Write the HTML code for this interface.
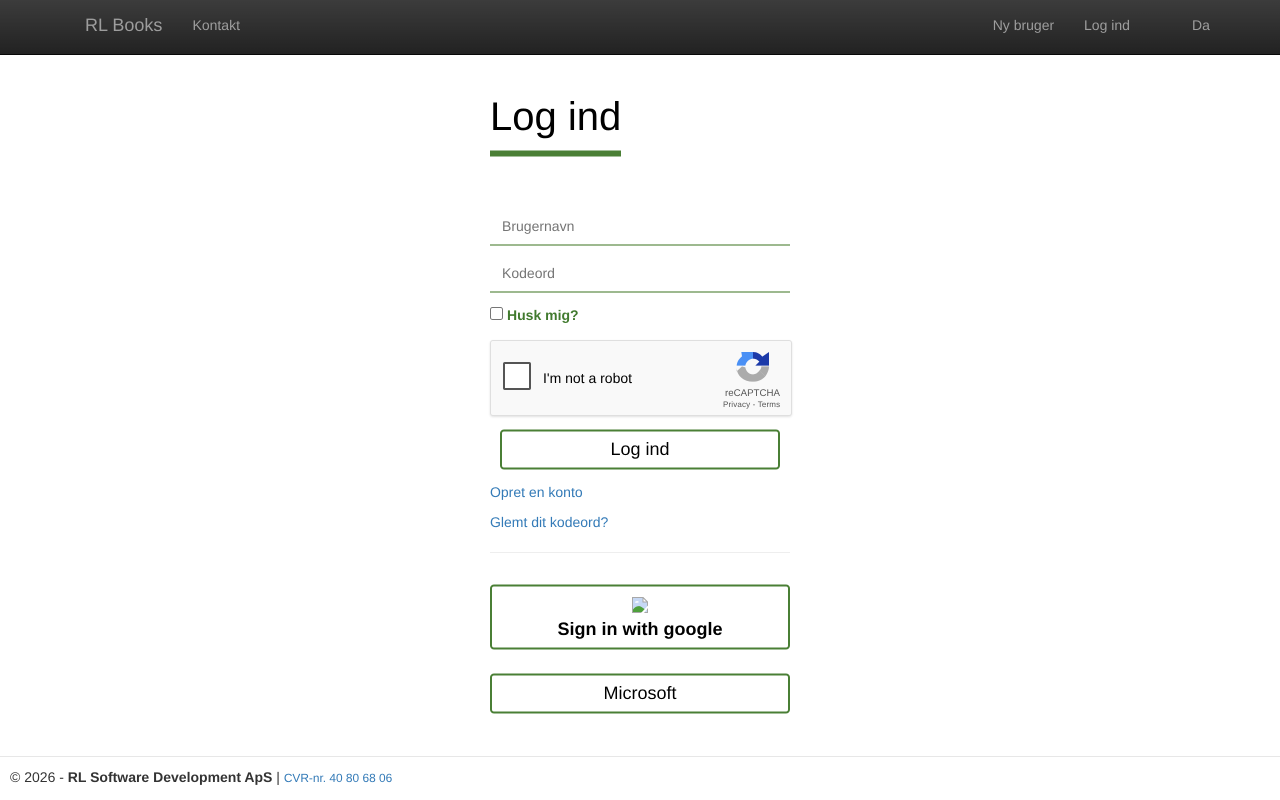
<!DOCTYPE html>
<html lang="da">
<head>
<meta charset="utf-8">
<title>Log ind</title>
<style>
html,body{margin:0;padding:0;background:#fff;}
body{width:1280px;height:800px;position:relative;overflow:hidden;font-family:"Liberation Sans",sans-serif;font-size:14px;line-height:20px;color:#333;text-rendering:geometricPrecision;}
.a{position:absolute;white-space:nowrap;}
.nav{left:0;top:0;width:1280px;height:54px;background:linear-gradient(to bottom,#3c3c3c 0,#222 100%);border-bottom:1px solid #080808;}
.n{color:#9d9d9d;top:15px;}
.field{left:490px;width:300px;height:34px;border-bottom:2px solid #9db98f;box-sizing:content-box;}
.ph{left:502px;color:#757575;}
.t{color:#000;text-align:center;font-size:18px;}
a{color:#337ab7;text-decoration:none;}
</style>
</head>
<body>
<div class="a nav"></div>
<div class="a n" style="left:85px;top:15px;font-size:18px;">RL Books</div>
<div class="a n" style="left:192.5px;">Kontakt</div>
<div class="a n" style="left:992.7px;">Ny bruger</div>
<div class="a n" style="left:1084px;">Log ind</div>
<div class="a n" style="left:1192px;">Da</div>

<div class="a" style="left:490px;top:92px;font-size:40px;line-height:50px;color:#000;">Log ind</div>

<!-- anti-aliased rules and button outlines -->
<svg class="a" style="left:0;top:0;" width="1280" height="800" viewBox="0 0 1280 800">
  <rect x="490" y="150.500" width="131" height="6" fill="#4a7f35"/>
  <g fill="#fff" stroke="#4a7f35" stroke-width="2">
    <rect x="501" y="430.500" width="278" height="38" rx="3"/>
    <rect x="491" y="585.500" width="298" height="63" rx="3"/>
    <rect x="491" y="674.500" width="298" height="38" rx="3"/>
  </g>
</svg>

<div class="a field" style="top:210px;"></div>
<div class="a ph" style="top:216px;">Brugernavn</div>
<div class="a field" style="top:257px;"></div>
<div class="a ph" style="top:263px;">Kodeord</div>

<div class="a" style="left:490px;top:307px;width:13px;height:13px;box-sizing:border-box;border:1px solid #767676;border-radius:2.5px;background:#fff;"></div>
<div class="a" style="left:507px;top:305px;font-weight:bold;color:#417a2e;">Husk mig?</div>

<div class="a" style="left:490px;top:340px;width:302px;height:76px;box-sizing:border-box;background:#f9f9f9;border:1px solid #dfdfdf;border-radius:3px;box-shadow:0 1px 2px rgba(0,0,0,.12);"></div>
<div class="a" style="left:503px;top:362px;width:28px;height:28px;box-sizing:border-box;background:#fff;border:2px solid #555;border-radius:2px;"></div>
<div class="a" style="left:543px;top:368px;font-size:14px;color:#000;">I'm not a robot</div>
<svg class="a" style="left:734px;top:348px;" width="38" height="38" viewBox="0 0 114 114">
  <path d="M57 12H22L24 25C14 33 9 42 8 53H34C36 42 45 33 57 32Z" fill="#4a90f5"/>
  <path d="M57 12C68 12 78 17 85 26L105 12V53H64L76 41C71 35 64 32 57 32Z" fill="#1c3aa9"/>
  <path d="M8 55H24L8 70ZM8 58C8 84 30 101 57 101C72 101 85 95 94 85L76 68C71 75 65 79 57 79C45 79 36 70 34 58L24 55H8Z" fill="#ababab"/>
  <path d="M60 55H105C105 66 100 76 94 85L76 68C80 64 82 60 82 55Z" fill="#ababab"/>
</svg>
<div class="a" style="left:725px;top:387px;font-size:9.700px;line-height:13px;color:#555;">reCAPTCHA</div>
<div class="a" style="left:723px;top:399px;font-size:8px;line-height:12px;letter-spacing:.15px;color:#555;">Privacy - Terms</div>

<div class="a t" style="left:500px;top:439px;width:280px;">Log ind</div>
<a class="a" href="#" style="left:490px;top:482px;">Opret en konto</a>
<a class="a" href="#" style="left:490px;top:512px;">Glemt dit kodeord?</a>
<div class="a" style="left:490px;top:552px;width:300px;height:1px;background:#eee;"></div>

<svg class="a" style="left:632px;top:597px;" width="16" height="16" viewBox="0 0 16 16">
  <path d="M0.500 0.500H11L15.500 5V15.500H0.500Z" fill="#c6d8f5" stroke="#a8a8a8"/>
  <path d="M11 .5V5H15.500Z" fill="#fff" stroke="#a8a8a8"/>
  <path d="M1 15V12.500C3 9.500 7 8 9.500 10L14 13L12 15Z" fill="#4ea03c"/>
  <path d="M3 5.500C3 4 6 3.500 7 5c-1 .8-3 1-4 .5z" fill="#fff"/>
  <path d="M9 16L16 8.500V11L12 16Z" fill="#fff"/>
</svg>
<div class="a" style="left:490px;top:618px;width:300px;text-align:center;font-size:18px;line-height:22px;font-weight:bold;color:#000;">Sign in with google</div>
<div class="a t" style="left:490px;top:683px;width:300px;">Microsoft</div>

<div class="a" style="left:0;top:756px;width:1280px;height:1px;background:#e7e7e7;"></div>
<div class="a" style="left:10px;top:767px;">© 2026 - <b>RL Software Development ApS</b> | <a href="#" style="font-size:11.900px;">CVR-nr. 40 80 68 06</a></div>
</body>
</html>
